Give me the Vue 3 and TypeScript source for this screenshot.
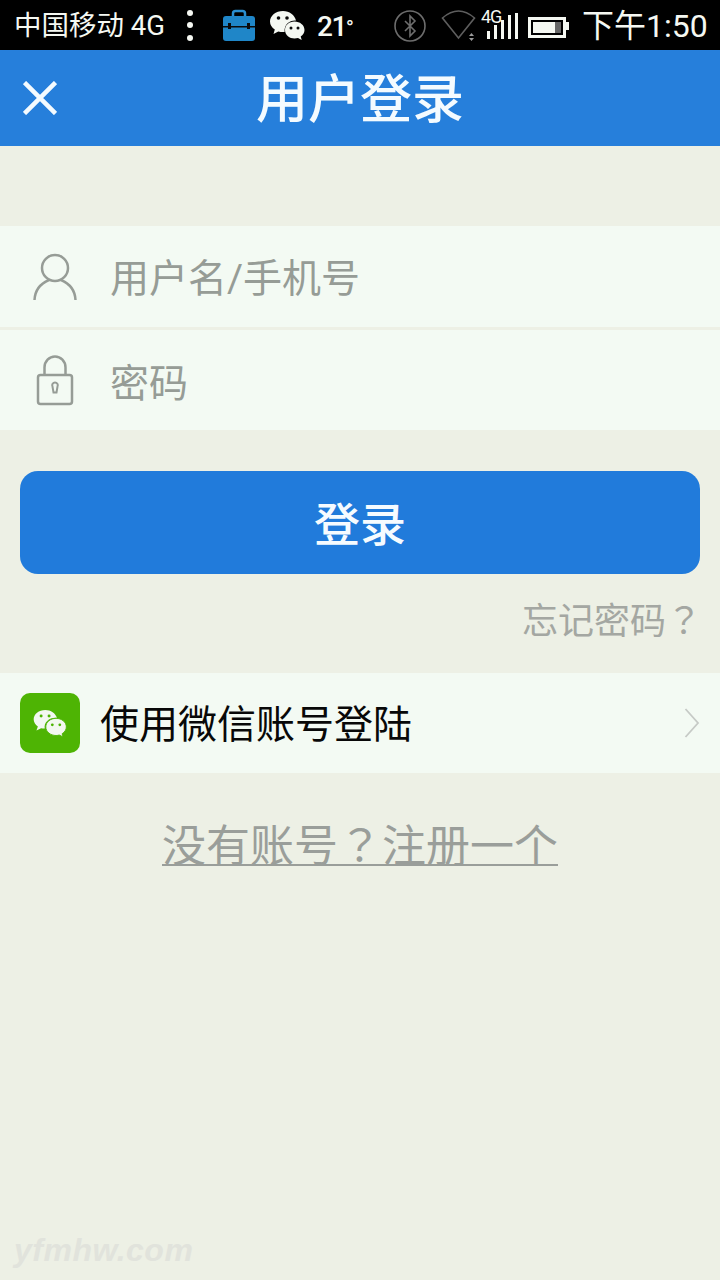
<script setup lang="ts">
const title: string = '用户登录'
</script>

<template>
  <div class="page">
    <div class="status">
      <span class="carrier">中国移动 4G</span>
      <span class="dots"><i></i><i></i><i></i></span>
      <svg class="case" width="34" height="34" viewBox="0 0 34 34">
        <path d="M11 9V5.500A2.500 2.500 0 0 1 13.500 3h7A2.500 2.500 0 0 1 23 5.500V9" fill="none" stroke="#2a8fd0" stroke-width="2.500"/>
        <rect x="1" y="8" width="32" height="25" rx="3" fill="#1f86c8"/>
        <rect x="1" y="18" width="32" height="1.500" fill="#0b0b0b"/>
        <rect x="6" y="15" width="3" height="6" fill="#0b0b0b"/>
        <rect x="25" y="15" width="3" height="6" fill="#0b0b0b"/>
      </svg>
      <svg class="wechat-s" width="36" height="32" viewBox="0 0 36 32">
        <path d="M14 1C6.800 1 1 5.700 1 11.500c0 3.300 1.900 6.200 4.800 8.100L4.500 24l4.800-2.600c1.500.4 3 .6 4.700.6.600 0 1.100 0 1.600-.1C15 14 20.800 10 27 10.500 25.700 5 20.400 1 14 1z" fill="#f4f8f2"/>
        <path d="M35.500 20c0-5-4.700-8.500-10-8.500S16 15 16 20s4.700 8.500 9.500 8.500c1.200 0 2.400-.2 3.500-.5l3.700 2-1-3.400c2.300-1.600 3.800-4 3.800-6.600z" fill="#f4f8f2"/>
        <circle cx="9.500" cy="8" r="1.800" fill="#0b0b0b"/><circle cx="18" cy="8" r="1.800" fill="#0b0b0b"/>
        <circle cx="22" cy="18" r="1.500" fill="#0b0b0b"/><circle cx="29" cy="18" r="1.500" fill="#0b0b0b"/>
      </svg>
      <span class="temp">21<span class="deg">°</span></span>
      <svg class="bt" width="32" height="32" viewBox="0 0 32 32" fill="none" stroke="#6d6d6d" stroke-width="1.600">
        <circle cx="16" cy="16" r="15"/>
        <path d="M11 11l10 10-5 5V6l5 5-10 10"/>
      </svg>
      <svg class="wifi" width="36" height="32" viewBox="0 0 36 32" fill="none">
        <path d="M1.500 9Q17.500-5 33.500 9L17.500 29z" stroke="#5e5e5e" stroke-width="1.600"/>
        <path d="M28 27l2.500-3 2.500 3zM28 29l2.500 3 2.500-3z" fill="#9a9a9a"/>
      </svg>
      <span class="signal">
        <span class="net">4G</span>
        <span class="bars"><i class="b1"></i><i class="b2"></i><i class="b3"></i><i class="b4"></i><i class="b5"></i></span>
      </span>
      <span class="battery"><span class="level"></span><span class="rest"></span></span>
      <span class="time">下午1:50</span>
    </div>

    <header class="bar">
      <svg class="close" width="34" height="34" viewBox="0 0 34 34" fill="none" stroke="#f4fbff" stroke-width="4.500">
        <path d="M1.500 1.500l31 31M32.500 1.500l-31 31"/>
      </svg>
      <h1>{{ title }}</h1>
    </header>

    <section class="form">
      <div class="row">
        <svg width="46" height="50" viewBox="0 0 46 50" fill="none" stroke="#969c96" stroke-width="2.500">
          <circle cx="23" cy="16" r="13"/>
          <path d="M2.500 48C3 37 10 31 17 28M29 28C36 31 43 37 43.500 48"/>
        </svg>
        <span class="ph">用户名/手机号</span>
      </div>
      <div class="row">
        <svg width="46" height="52" viewBox="0 0 46 52" fill="none" stroke="#969c96" stroke-width="2.500">
          <path d="M12.500 21V13.500a10.500 11 0 0 1 21 0V21"/>
          <rect x="6" y="21" width="34" height="29" rx="2.500"/>
          <path d="M20.500 32.500a2.800 2.800 0 1 1 5 0l-1 6h-3z" stroke-width="2"/>
        </svg>
        <span class="ph low">密码</span>
      </div>
    </section>

    <button class="login">登录</button>
    <div class="forgot">忘记密码<span class="q">？</span></div>

    <div class="wx">
      <span class="wx-logo">
        <svg width="34" height="28" viewBox="0 0 36 30">
          <path d="M13 1C6 1 0.500 5.300 0.500 11c0 3 1.700 5.800 4.500 7.700L3.500 23l5-2.500c1.200.3 2.500.5 3.900.5C11 14 18 8.500 25.500 9.500 23.800 4.500 19 1 13 1z" fill="#f3f8f1"/>
          <path d="M24.500 10C18.500 10 13.500 14 13.500 19.200s5 9.200 11 9.200c1.200 0 2.300-.2 3.400-.5l4.100 2-1-3.400c2.900-1.800 4.500-4.500 4.500-7.300C35.500 14 30.500 10 24.500 10z" fill="#f3f8f1" stroke="#4eb404" stroke-width="1"/>
          <circle cx="8.500" cy="7.500" r="1.600" fill="#4eb404"/><circle cx="17" cy="7.500" r="1.600" fill="#4eb404"/>
          <circle cx="20.500" cy="17" r="1.500" fill="#4eb404"/><circle cx="28.500" cy="17" r="1.500" fill="#4eb404"/>
        </svg>
      </span>
      <span class="wx-text">使用微信账号登陆</span>
      <svg class="chev" width="16" height="32" viewBox="0 0 16 32" fill="none" stroke="#c6cac6" stroke-width="1.800">
        <path d="M1.500 2L14 16 1.500 30"/>
      </svg>
    </div>

    <div class="register">没有账号<span class="q">？</span>注册一个</div>

    <div class="mark">yfmhw.com</div>
  </div>
</template>

<style>
html, body { margin: 0; padding: 0; }
</style>

<style scoped>
.page {
  position: relative;
  width: 720px;
  height: 1280px;
  overflow: hidden;
  background: #edf0e5;
  font-family: "Roboto", "Noto Sans CJK SC", sans-serif;
}
.q { font-family: "Noto Sans CJK TC", sans-serif; }
.status {
  height: 50px;
  background: #000;
  display: flex;
  align-items: center;
  color: #f5f8f2;
  padding-left: 14px;
  box-sizing: border-box;
}
.carrier { font-size: 27.500px; width: 151px; white-space: nowrap; margin-bottom: 5px; }
.dots { display: flex; flex-direction: column; gap: 6.500px; margin-left: 22px; }
.dots i { display: block; width: 6px; height: 6px; border-radius: 50%; background: #f5f8f2; }
.case { margin-left: 29px; }
.wechat-s { margin-left: 13px; margin-top: 1px; }
.temp { font-size: 28px; font-weight: 500; margin-left: 12px; margin-top: 3px; width: 38px; white-space: nowrap; letter-spacing: -1.500px; }
.deg { font-size: 22px; font-weight: 400; }
.bt { margin-left: 39px; margin-top: 1px; flex: none; }
.wifi { margin-left: 15px; flex: none; }
.signal { position: relative; flex: none; width: 40px; height: 40px; margin-left: 4px; margin-bottom: 12px; }
.net { position: absolute; left: 0; top: 10px; font-size: 18px; letter-spacing: -1px; line-height: 16px; }
.bars { position: absolute; left: 6px; bottom: 0; display: flex; align-items: flex-end; gap: 4px; }
.bars i { display: block; width: 3px; background: #f5f8f2; }
.b1 { height: 8px; } .b2 { height: 14px; } .b3 { height: 19px; } .b4 { height: 24px; } .b5 { height: 26px; }
.battery {
  display: flex;
  flex: none;
  width: 28px;
  height: 11px;
  border: 3px solid #f5f8f2;
  margin-left: 7px;
  margin-top: 4px;
  position: relative;
  padding: 2px;
}
.battery::after { content: ""; position: absolute; right: -6px; top: 2px; width: 3px; height: 8px; background: #f5f8f2; }
.level { width: 22px; background: #f5f8f2; }
.rest { flex: 1; background: #666; }
.time { font-size: 32px; margin-left: 16px; margin-bottom: 5px; white-space: nowrap; }

.bar {
  position: relative;
  height: 96px;
  background: #267fdb;
  display: flex;
  align-items: center;
  justify-content: center;
}
.close { position: absolute; left: 23px; top: 31px; }
h1 { margin: 0 0 6px; font-size: 52px; font-weight: 500; color: #f4fbff; }

.form { margin-top: 80px; }
.row {
  height: 101px;
  background: #f3faf3;
  display: flex;
  align-items: center;
  padding-left: 32px;
  box-sizing: border-box;
}
.row + .row { margin-top: 3px; height: 100px; }
.ph { font-size: 39px; color: #969c96; margin-left: 32px; margin-bottom: 4px; }
.ph.low { margin-bottom: 0; }
.row svg { flex: none; }

.login {
  display: block;
  width: 680px;
  height: 103px;
  margin: 41px 20px 0;
  border: 0;
  border-radius: 18px;
  background: #217bdb;
  color: #f6fbff;
  font-family: inherit;
  font-size: 46px;
  font-weight: 500;
  padding: 0 0 4px;
}
.forgot {
  margin-top: 23px;
  height: 50px;
  line-height: 42px;
  padding-right: 18px;
  text-align: right;
  font-size: 36px;
  color: #a4a7a2;
}
.wx {
  margin-top: 26px;
  height: 100px;
  background: #f3faf3;
  display: flex;
  align-items: center;
  padding: 0 20px;
  box-sizing: border-box;
}
.wx-logo {
  width: 60px;
  height: 60px;
  border-radius: 10px;
  background: #4eb404;
  display: flex;
  align-items: center;
  justify-content: center;
}
.wx-text { font-size: 39px; color: #080808; margin-left: 20px; margin-bottom: 4px; flex: 1; white-space: nowrap; }
.register {
  margin-top: 39px;
  text-align: center;
  font-size: 44px;
  color: #9a9e9a;
  text-decoration: underline;
  text-decoration-thickness: 2px;
  text-underline-offset: 2px;
  line-height: 62px;
}
.mark {
  position: absolute;
  left: 14px;
  top: 1232px;
  font-family: "Liberation Sans", sans-serif;
  font-size: 32px;
  font-weight: 700;
  font-style: italic;
  color: #e1e3dc;
  letter-spacing: 0.500px;
}
</style>
